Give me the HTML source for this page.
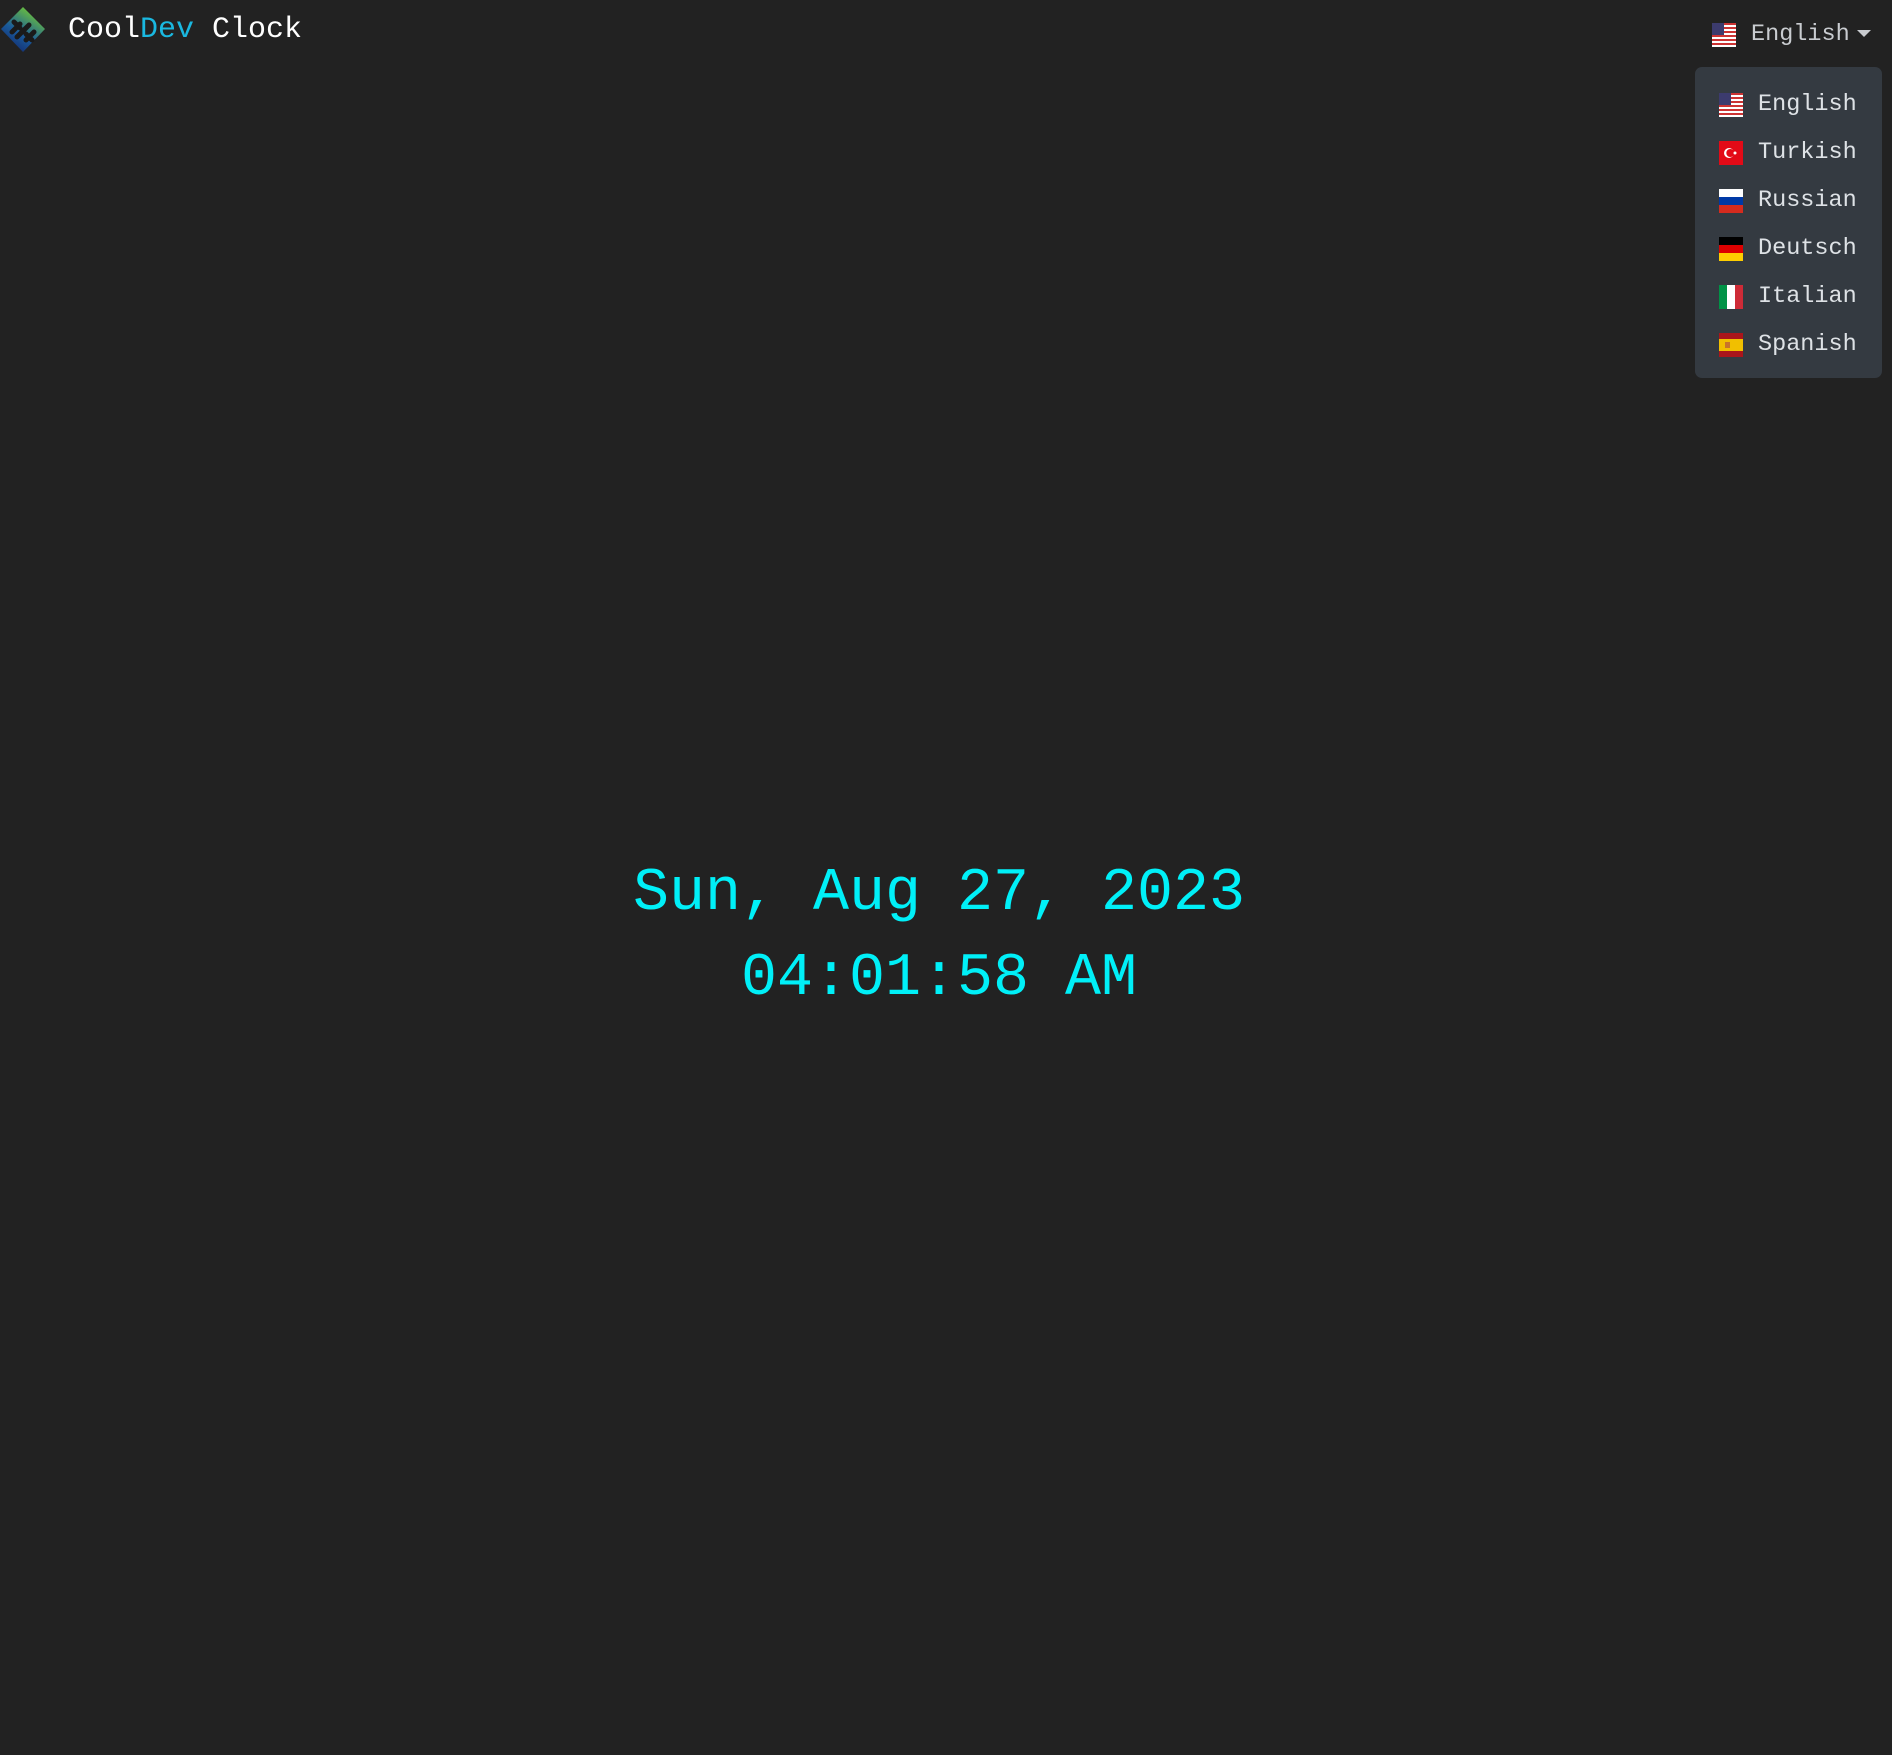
<!DOCTYPE html>
<html><head><meta charset="utf-8"><style>
html,body{margin:0;padding:0;background:#222;width:1892px;height:1755px;overflow:hidden;font-family:"Liberation Mono",monospace}
.abs{position:absolute;white-space:nowrap}
.brand{left:68px;top:10px;font-size:30px;color:#fff;line-height:40px}
.brand span{color:#1ab8e0}
.tog{left:1751px;top:18px;font-size:23.5px;color:#c9ccd0;line-height:34px}
.caret{left:1857px;top:30px;width:0;height:0;border-left:7px solid transparent;border-right:7px solid transparent;border-top:7px solid #c9ccd0}
.menu{left:1695px;top:67px;width:187px;height:311px;background:#343a41;border-radius:7px}
.item{left:1758px;font-size:23.5px;color:#dee2e6;line-height:30px}
.flag{position:absolute;width:24px;height:24px;overflow:hidden}
.clock{left:-7px;width:1892px;text-align:center;color:#00f0f8;font-size:60px;line-height:70px}
</style></head><body>
<svg class="abs" style="left:0;top:6px" width="46" height="48" viewBox="0 0 46 48">
<defs><linearGradient id="g" x1="0" y1="1" x2="0.6" y2="0"><stop offset="0" stop-color="#101a60"/><stop offset="0.5" stop-color="#1a5a9a"/><stop offset="1" stop-color="#6cc23a"/></linearGradient></defs>
<polygon points="23,1 45,23 23,46 1,23" fill="url(#g)"/>
<path d="M14,16 L20,22 M26,28 L32,34 M17,31 L29,19 M12,26 L20,18 M26,34 L34,26" stroke="#1a1a1a" stroke-width="5" stroke-linecap="round"/>
</svg>
<div class="abs brand">Cool<span>Dev</span> Clock</div>

<svg class="flag" style="left:1712px;top:23px" viewBox="0 0 24 24"><rect width="24" height="24" fill="#fff"/><g fill="#c33"><rect y="0" width="24" height="2"/><rect y="4" width="24" height="2"/><rect y="8" width="24" height="2"/><rect y="12" width="24" height="2"/><rect y="16" width="24" height="2"/><rect y="20" width="24" height="2"/></g><rect width="12" height="12" fill="#3c3b6e"/></svg>
<div class="abs tog">English</div>
<div class="abs caret"></div>

<div class="abs menu"></div>
<svg class="flag" style="left:1719px;top:93px" viewBox="0 0 24 24"><rect width="24" height="24" fill="#fff"/><g fill="#c33"><rect y="0" width="24" height="2"/><rect y="4" width="24" height="2"/><rect y="8" width="24" height="2"/><rect y="12" width="24" height="2"/><rect y="16" width="24" height="2"/><rect y="20" width="24" height="2"/></g><rect width="12" height="12" fill="#3c3b6e"/></svg>
<div class="abs item" style="top:90px">English</div>
<svg class="flag" style="left:1719px;top:141px" viewBox="0 0 24 24"><rect width="24" height="24" fill="#e30a17"/><circle cx="10" cy="12" r="5" fill="#fff"/><circle cx="11.3" cy="12" r="4" fill="#e30a17"/><circle cx="16" cy="12" r="1.5" fill="#fff"/></svg>
<div class="abs item" style="top:138px">Turkish</div>
<svg class="flag" style="left:1719px;top:189px" viewBox="0 0 24 24"><rect width="24" height="8" fill="#fff"/><rect y="8" width="24" height="8" fill="#0039a6"/><rect y="16" width="24" height="8" fill="#d52b1e"/></svg>
<div class="abs item" style="top:186px">Russian</div>
<svg class="flag" style="left:1719px;top:237px" viewBox="0 0 24 24"><rect width="24" height="8" fill="#000"/><rect y="8" width="24" height="8" fill="#dd0000"/><rect y="16" width="24" height="8" fill="#ffce00"/></svg>
<div class="abs item" style="top:234px">Deutsch</div>
<svg class="flag" style="left:1719px;top:285px" viewBox="0 0 24 24"><rect width="8" height="24" fill="#009246"/><rect x="8" width="8" height="24" fill="#fff"/><rect x="16" width="8" height="24" fill="#ce2b37"/></svg>
<div class="abs item" style="top:282px">Italian</div>
<svg class="flag" style="left:1719px;top:333px" viewBox="0 0 24 24"><rect width="24" height="24" fill="#aa151b"/><rect y="6" width="24" height="12" fill="#f1bf00"/><rect x="6" y="9" width="5" height="6" fill="#c8742a"/></svg>
<div class="abs item" style="top:330px">Spanish</div>

<div class="abs clock" style="top:859px">Sun, Aug 27, 2023</div>
<div class="abs clock" style="top:944px">04:01:58 AM</div>
</body></html>
